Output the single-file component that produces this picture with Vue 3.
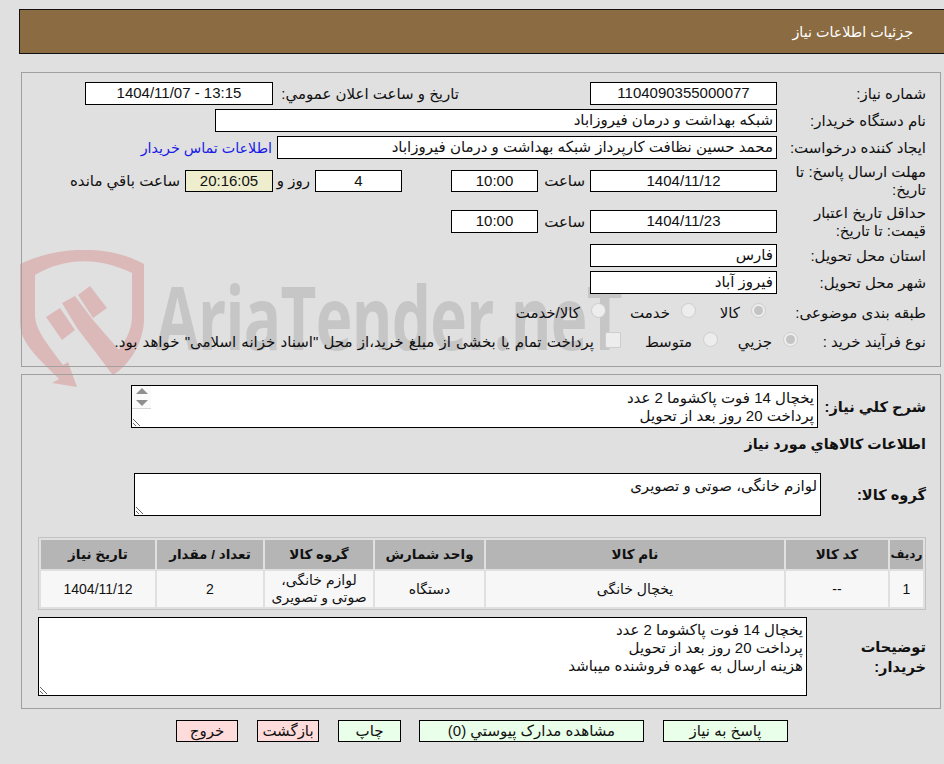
<script setup>
const needs = 'یخچال 14 فوت پاکشوما 2 عدد\nپرداخت 20 روز بعد از تحویل'
const notes = 'یخچال 14 فوت پاکشوما 2 عدد\nپرداخت 20 روز بعد از تحویل\nهزینه ارسال به عهده فروشنده میباشد'
const heads = ['ردیف', 'کد کالا', 'نام کالا', 'واحد شمارش', 'گروه کالا', 'تعداد / مقدار', 'تاریخ نیاز']
</script>

<template>
  <div class="page" dir="rtl">
    <div class="mark" aria-hidden="true">
      <svg class="shield" viewBox="0 0 130 140" width="130" height="140">
        <path fill="#dcb9b9" d="M0 14 C40 -5 90 -5 124 14 L124 72 C122 96 108 116 93 125 L85 115 C100 100 112 85 112 66 L112 23 C80 7 45 7 15 25 L15 66 C16 82 30 97 43 115 L48 112 L57 137 L32 133 L39 129 C15 105 0 92 0 72 Z"/>
        <path fill="#dcb9b9" d="M58 45 L70 36 L87 58 L73 68 Z M42 53 L55 46 L73 70 L105 107 L93 125 L57 78 Z M26 67 L40 58 L55 80 L42 90 Z"/>
      </svg>
      <div class="wordmark">AriaTender.neT</div>
    </div>

    <header class="head">جزئیات اطلاعات نیاز</header>

    <section class="panel first">
      <div class="row r1">
        <span class="lab">شماره نیاز:</span>
        <div class="box mid">1104090355000077</div>
        <span class="lab2">تاریخ و ساعت اعلان عمومي:</span>
        <div class="box mid wide ltr">1404/11/07 - 13:15</div>
      </div>
      <div class="row r2">
        <span class="lab">نام دستگاه خریدار:</span>
        <div class="box w562">شبکه بهداشت و درمان فیروزاباد</div>
      </div>
      <div class="row r3">
        <span class="lab">ایجاد کننده درخواست:</span>
        <div class="box w500">محمد حسین نظافت کارپرداز شبکه بهداشت و درمان فیروزاباد</div>
        <a class="link">اطلاعات تماس خریدار</a>
      </div>
      <div class="row r4">
        <span class="lab">مهلت ارسال پاسخ: تا تاریخ:</span>
        <div class="box mid">1404/11/12</div>
        <span class="sa">ساعت</span>
        <div class="box time">10:00</div>
        <div class="box days">4</div>
        <span class="roz">روز و</span>
        <div class="box timer">20:16:05</div>
        <span class="left">ساعت باقي مانده</span>
      </div>
      <div class="row r5">
        <span class="lab">حداقل تاریخ اعتبار قیمت: تا تاریخ:</span>
        <div class="box mid">1404/11/23</div>
        <span class="sa">ساعت</span>
        <div class="box time">10:00</div>
      </div>
      <div class="row r6">
        <span class="lab">استان محل تحویل:</span>
        <div class="box mid start">فارس</div>
      </div>
      <div class="row r7">
        <span class="lab">شهر محل تحویل:</span>
        <div class="box mid start">فیروز آباد</div>
      </div>
      <div class="row r8">
        <span class="lab">طبقه بندی موضوعی:</span>
        <label class="opt o1"><i class="radio on"></i>کالا</label>
        <label class="opt o2"><i class="radio"></i>خدمت</label>
        <label class="opt"><i class="radio"></i>کالا/خدمت</label>
      </div>
      <div class="row r9">
        <span class="lab lab-short">نوع فرآیند خرید :</span>
        <label class="opt p1"><i class="radio on"></i>جزیي</label>
        <label class="opt p2"><i class="radio"></i>متوسط</label>
        <label class="opt long"><i class="check"></i>پرداخت تمام یا بخشی از مبلغ خرید،از محل "اسناد خزانه اسلامی" خواهد بود.</label>
      </div>
    </section>

    <section class="panel second">
      <div class="desc">
        <strong class="desc-lab">شرح کلي نیاز:</strong>
        <div class="area-wrap">
          <textarea class="area a1" readonly :value="needs"></textarea>
          <div class="spin"><i class="up"></i><i class="down"></i></div>
        </div>
      </div>
      <h3 class="title">اطلاعات کالاهاي مورد نیاز</h3>
      <div class="group">
        <strong class="group-lab">گروه کالا:</strong>
        <textarea class="area a2" readonly value="لوازم خانگی، صوتی و تصویری"></textarea>
      </div>
      <table class="grid">
        <thead>
          <tr><th v-for="h in heads" :key="h">{{ h }}</th></tr>
        </thead>
        <tbody>
          <tr>
            <td>1</td>
            <td>--</td>
            <td>یخچال خانگی</td>
            <td>دستگاه</td>
            <td>لوازم خانگی،<br>صوتی و تصویری</td>
            <td>2</td>
            <td>1404/11/12</td>
          </tr>
        </tbody>
      </table>
      <div class="notes">
        <strong class="notes-lab">توضیحات خریدار:</strong>
        <textarea class="area a3" readonly :value="notes"></textarea>
      </div>
    </section>

    <footer class="actions">
      <button class="btn ok b1">پاسخ به نیاز</button>
      <button class="btn ok b2">مشاهده مدارک پیوستي (0)</button>
      <button class="btn ok b3">چاپ</button>
      <button class="btn no b4">بازگشت</button>
      <button class="btn no b4">خروج</button>
    </footer>
  </div>
</template>

<style>
html, body { margin: 0; background: #e0e0e0; }
</style>

<style scoped>
.page {
  position: relative;
  width: 944px;
  height: 764px;
  box-sizing: border-box;
  padding-top: 9px;
  overflow: hidden;
  background: #e0e0e0;
  color: #111;
  font: 15px/18px "Liberation Sans", "DejaVu Sans", sans-serif;
}
.mark { position: absolute; left: 20px; top: 250px; width: 610px; height: 140px; direction: ltr; }
.shield { position: absolute; left: 0; top: 0; }
.wordmark {
  position: absolute;
  left: 136px;
  top: 11px;
  font: bold 88px/110px "Open Sans", sans-serif;
  color: #c6c6c6;
  letter-spacing: -1px;
  white-space: nowrap;
  transform: scaleX(0.705);
  transform-origin: left top;
}
.head {
  position: relative;
  box-sizing: border-box;
  height: 45px;
  margin-left: 19px;
  padding: 13px 31px 0 0;
  background: #8b6b41;
  border: 1px solid #111;
  border-right: 0;
  color: #fff;
  font-size: 14.3px;
}
.panel {
  position: relative;
  box-sizing: border-box;
  width: 920px;
  margin-right: 3px;
  border: 1px solid #a0a0a0;
}
.first { height: 295px; margin-top: 18px; padding: 9px 14px 0 0; }
.second { height: 335px; margin-top: 7px; padding: 10px 14px 0 0; }
.row { display: flex; align-items: center; }
.r1, .r2, .r3, .r5, .r6, .r7 { height: 23px; }
.r2, .r3, .r7 { margin-top: 4px; }
.r4 { height: 22px; margin-top: 11px; }
.r5 { margin-top: 18px; }
.r6 { margin-top: 11px; }
.r8 { height: 20px; margin-top: 9px; }
.r9 { height: 20px; margin-top: 9px; }
.lab { flex: none; box-sizing: border-box; width: 149px; padding-left: 9px; }
.lab-short { width: 128px; padding-left: 0; }
.box {
  flex: none;
  box-sizing: border-box;
  height: 100%;
  padding: 0 3px;
  background: #fff;
  border: 1px solid #000;
  line-height: 20px;
  white-space: nowrap;
}
.mid { width: 187px; text-align: center; }
.wide { width: 188px; }
.ltr { direction: ltr; }
.start { text-align: right; }
.w562 { width: 562px; }
.w500 { width: 500px; }
.lab2 { margin: 0 131px 0 4px; white-space: nowrap; width: 182px; }
.link { margin-right: 5px; color: #1a1ae6; font-size: 14.3px; white-space: nowrap; }
.sa { width: 52px; box-sizing: border-box; padding-right: 5px; }
.time { width: 87px; text-align: center; }
.days { width: 87px; margin-right: 49px; text-align: center; }
.roz { width: 42px; box-sizing: border-box; padding-right: 5px; }
.timer { width: 88px; text-align: center; background: #eeeecf; }
.left { padding-right: 5px; white-space: nowrap; }
.opt { display: flex; align-items: center; gap: 11px; white-space: nowrap; }
.o1 { box-sizing: border-box; width: 81px; padding-right: 11px; }
.o2 { width: 90px; }
.p1 { width: 80px; }
.p2 { width: 97px; }
.long { word-spacing: 1px; }
.radio, .check {
  flex: none;
  box-sizing: border-box;
  width: 15px;
  height: 15px;
  border: 1px solid #cdcdcd;
  background: #ededed;
  position: relative;
  top: -3px;
}
.radio { border-radius: 50%; }
.check { width: 16px; height: 16px; border-radius: 2px; top: -2px; }
.radio.on::after {
  content: "";
  position: absolute;
  inset: 2px;
  border-radius: 50%;
  background: #c4c4c4;
}
.desc { display: flex; align-items: center; height: 43px; }
.desc-lab, .group-lab, .notes-lab { flex: none; font-size: 14.6px; font-weight: bold; }
.desc-lab { width: 108px; box-sizing: border-box; }
.area-wrap { position: relative; width: 687px; height: 43px; }
.area {
  display: block;
  box-sizing: border-box;
  margin: 0;
  padding: 3px 3px 1px;
  background: #fff;
  border: 1px solid #000;
  border-radius: 0;
  outline: none;
  color: #111;
  overflow: hidden;
  resize: both;
  direction: rtl;
  font: 15px/18px "Liberation Sans", "DejaVu Sans", sans-serif;
}
.a1 { width: 687px; height: 43px; }
.spin {
  position: absolute;
  left: 1px;
  top: 1px;
  display: flex;
  flex-direction: column;
  align-items: center;
  gap: 6px;
  width: 19px;
  height: 23px;
  padding-top: 2px;
  box-sizing: border-box;
  background: #fafafa;
  border-bottom: 1px solid #d6d6d6;
}
.up, .down { width: 0; height: 0; border-left: 6px solid transparent; border-right: 6px solid transparent; }
.up { border-bottom: 6px solid #8f8f8f; }
.down { border-top: 6px solid #8f8f8f; }
.title { margin: 6px 0 0; font-size: 14.3px; line-height: 20px; font-weight: bold; }
.group { display: flex; align-items: center; height: 43px; margin-top: 19px; }
.group-lab { width: 105px; }
.a2 { width: 687px; height: 43px; }
.grid {
  width: 888px;
  margin: 21px 0 0;
  table-layout: fixed;
  border: 1px solid #c2c2c2;
  border-spacing: 2px;
  border-collapse: separate;
  font-size: 14px;
  line-height: 17px;
}
.grid th { height: 29px; padding: 0; background: #b5b5b5; font-size: 13.5px; font-weight: bold; }
.grid td { height: 36px; padding: 0; background: #f7f7f7; text-align: center; }
.grid th:nth-child(1) { width: 33px; font-size: 12px; }
.grid th:nth-child(2) { width: 102px; }
.grid th:nth-child(3) { width: 298px; }
.grid th:nth-child(4) { width: 109px; }
.grid th:nth-child(5) { width: 108px; }
.grid th:nth-child(6) { width: 106px; }
.grid th:nth-child(7) { width: 114px; }
.notes { display: flex; align-items: center; height: 79px; margin-top: 7px; }
.notes-lab { width: 119px; line-height: 20px; padding-left: 40px; box-sizing: border-box; }
.a3 { width: 769px; height: 79px; }
.actions { position: relative; display: flex; gap: 19px; margin: 11px 156px 0 0; }
.btn {
  box-sizing: border-box;
  height: 22px;
  padding: 0;
  border: 1px solid #000;
  color: #111;
  font: 15px/20px "Liberation Sans", "DejaVu Sans", sans-serif;
}
.ok { background: #e9ffe9; }
.no { background: #ffdcdc; }
.b1 { width: 125px; }
.b2 { width: 225px; margin-left: -1px; }
.b3 { width: 63px; }
.b4 { width: 62px; }
</style>
